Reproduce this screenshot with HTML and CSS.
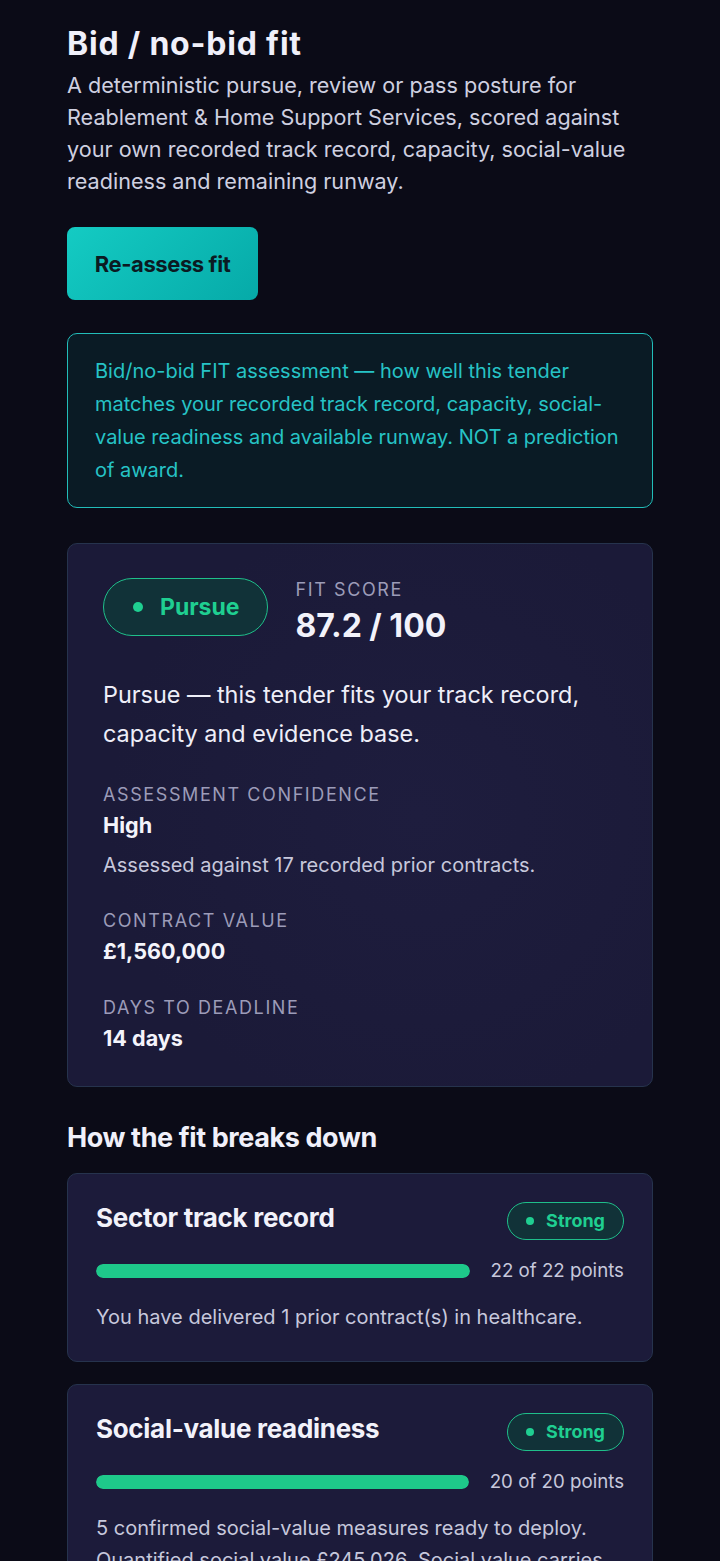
FILE: index.html
```html
<!DOCTYPE html>
<html lang="en">
<head>
    <meta charset="UTF-8">
    <meta name="viewport" content="width=device-width, initial-scale=1.0">
    <title>Bid / no-bid fit</title>
    <link rel="stylesheet" href="styles.css">
</head>
<body>
    <main class="page">
        <h1 class="title">Bid / no-bid fit</h1>
        <p class="intro">A deterministic pursue, review or pass posture for Reablement &amp; Home Support Services, scored against your own recorded track record, capacity, social-value readiness and remaining runway.</p>

        <button class="btn-primary">Re-assess fit</button>

        <div class="notice">
            Bid/no-bid FIT assessment — how well this tender matches your recorded track record, capacity, social-value readiness and available runway. NOT a prediction of award.
        </div>

        <section class="card summary">
            <div class="summary-head">
                <span class="pill pill-lg"><span class="dot"></span>Pursue</span>
                <div class="score">
                    <div class="label">Fit score</div>
                    <div class="score-value">87.2 / 100</div>
                </div>
            </div>
            <p class="verdict">Pursue — this tender fits your track record, capacity and evidence base.</p>

            <div class="field">
                <div class="label">Assessment confidence</div>
                <div class="value">High</div>
                <p class="note">Assessed against 17 recorded prior contracts.</p>
            </div>
            <div class="field">
                <div class="label">Contract value</div>
                <div class="value">£1,560,000</div>
            </div>
            <div class="field">
                <div class="label">Days to deadline</div>
                <div class="value">14 days</div>
            </div>
        </section>

        <h2 class="section-title">How the fit breaks down</h2>

        <section class="card factor">
            <div class="factor-head">
                <h3>Sector track record</h3>
                <span class="pill"><span class="dot"></span>Strong</span>
            </div>
            <div class="bar-row">
                <div class="bar"><div class="bar-fill" style="width: 100%"></div></div>
                <span class="points">22 of 22 points</span>
            </div>
            <p class="factor-text">You have delivered 1 prior contract(s) in healthcare.</p>
        </section>

        <section class="card factor">
            <div class="factor-head">
                <h3>Social-value readiness</h3>
                <span class="pill"><span class="dot"></span>Strong</span>
            </div>
            <div class="bar-row">
                <div class="bar"><div class="bar-fill" style="width: 100%"></div></div>
                <span class="points">20 of 20 points</span>
            </div>
            <p class="factor-text">5 confirmed social-value measures ready to deploy. Quantified social value £245,026. Social value carries 10% of the evaluation weighting for this tender.</p>
        </section>
    </main>
</body>
</html>
```

FILE: styles.css
```css
body {
    margin: 0;
    background-color: #0b0b17;
    color: #ececf6;
    font-family: Inter, "Noto Sans", sans-serif;
}
.page {
    padding: 23px 67px 40px 67px;
}
.title {
    margin: 0;
    font-size: 32px;
    font-weight: 700;
    letter-spacing: 0.8px;
    line-height: 42px;
    color: #f0f0fa;
}
.intro {
    margin: 4px 0 0;
    font-size: 21.6px;
    line-height: 32px;
    color: #cfd0e0;
}
.btn-primary {
    margin-top: 30px;
    width: 191px;
    height: 73px;
    border: none;
    border-radius: 8px;
    background: linear-gradient(135deg, #14cbc3, #06aaa8);
    color: #0b1a22;
    font-family: Inter, sans-serif;
    font-size: 22px;
    font-weight: 700;
    letter-spacing: -0.4px;
    cursor: pointer;
}
.notice {
    margin-top: 33px;
    padding: 20.5px 26px 20px 27px;
    border: 1.5px solid #22bdb9;
    border-radius: 10px;
    background-color: #0a1b25;
    color: #26c3c6;
    font-size: 20px;
    line-height: 33px;
}
.card {
    border: 1px solid #26334d;
    border-radius: 10px;
    background-color: #1c1b3a;
}
.summary {
    margin-top: 35px;
    padding: 34px 35px 34px;
    background: radial-gradient(circle at 60% 50%, #1e1d3e 0%, #1b1a38 70%);
}
.summary-head {
    display: flex;
    align-items: flex-start;
    gap: 28px;
}
.pill {
    display: inline-flex;
    align-items: center;
    gap: 12px;
    padding: 0 18px;
    height: 38px;
    border: 1.5px solid #1fbf8a;
    border-radius: 20px;
    background-color: #113238;
    color: #1fcf91;
    font-size: 18px;
    font-weight: 700;
    box-sizing: border-box;
}
.dot {
    width: 8px;
    height: 8px;
    border-radius: 50%;
    background-color: #1fcf91;
}
.pill-lg {
    height: 58px;
    padding: 0 27px 0 29px;
    gap: 17px;
    border-radius: 30px;
    font-size: 23px;
}
.pill-lg .dot {
    width: 10px;
    height: 10px;
}
.label {
    font-size: 18px;
    letter-spacing: 1.6px;
    text-transform: uppercase;
    color: #9c9cb8;
    line-height: 24px;
}
.score-value {
    margin-top: 4px;
    font-size: 32px;
    font-weight: 700;
    line-height: 40px;
    color: #f2f2fa;
}
.verdict {
    margin: 29px 0 0;
    font-size: 23.4px;
    line-height: 39px;
    color: #eeeef8;
}
.field {
    margin-top: 30px;
}
.field + .field {
    margin-top: 31px;
}
.field .value {
    margin-top: 4px;
    font-size: 21.6px;
    font-weight: 700;
    line-height: 28px;
    color: #f4f4fb;
}
.note {
    margin: 13px 0 0;
    font-size: 20px;
    line-height: 26px;
    color: #c7c8dc;
}
.section-title {
    margin: 34px 0 0;
    font-size: 27px;
    font-weight: 700;
    letter-spacing: -0.4px;
    line-height: 34px;
    color: #f0f0fa;
}
.factor {
    margin-top: 18px;
    padding: 28px 28px 28px;
}
.factor + .factor {
    margin-top: 22px;
}
.factor-head {
    display: flex;
    justify-content: space-between;
    align-items: flex-start;
}
.factor-head h3 {
    margin: 0;
    font-size: 26px;
    font-weight: 700;
    letter-spacing: -0.3px;
    line-height: 32px;
    color: #f2f2fa;
}
.bar-row {
    display: flex;
    align-items: center;
    gap: 21px;
    margin-top: 18px;
}
.bar {
    flex: 1;
    height: 14px;
    border-radius: 7px;
    background-color: #2c2b4e;
    overflow: hidden;
}
.bar-fill {
    height: 100%;
    border-radius: 7px;
    background-color: #1ec98a;
}
.points {
    font-size: 18.7px;
    line-height: 26px;
    color: #c7c8dc;
    white-space: nowrap;
}
.factor-text {
    margin: 17px 0 0;
    font-size: 20px;
    line-height: 32px;
    color: #c7c8dc;
}
```
